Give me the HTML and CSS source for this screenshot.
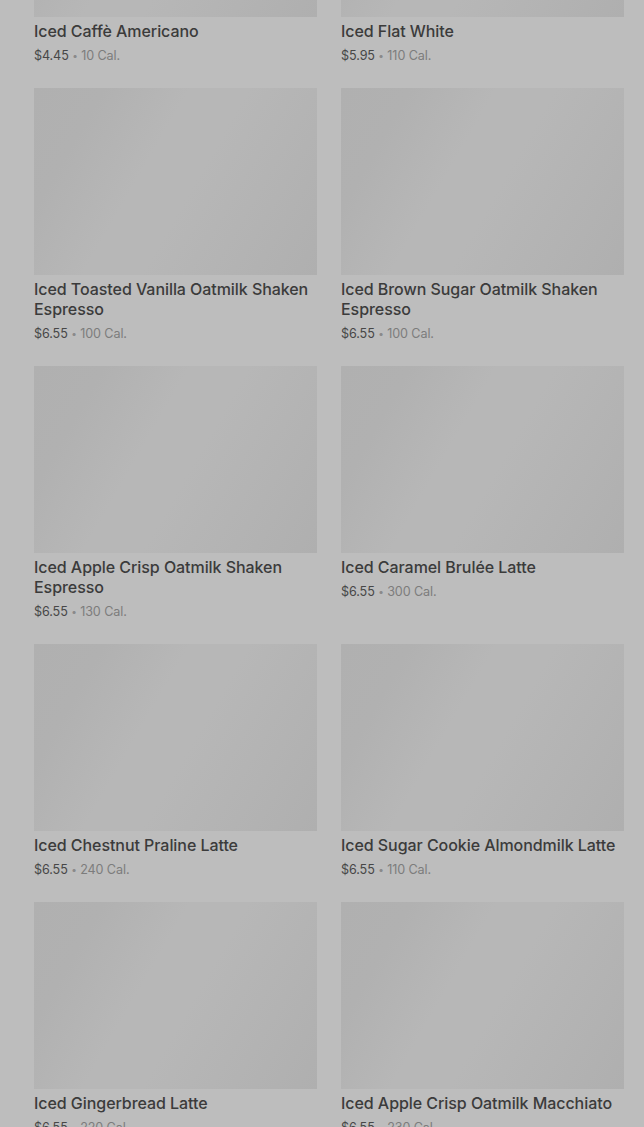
FILE: index.html
```html
<!DOCTYPE html>
<html>
<head>
<meta charset="utf-8">
<link rel="stylesheet" href="styles.css">
</head>
<body>
<div class="page">
  <div class="grid">
    <div class="card"><div class="thumb"></div><div class="name">Iced Caffè Americano</div><div class="meta"><span class="price">$4.45</span> <span class="dot">•</span> 10 Cal.</div></div>
    <div class="card"><div class="thumb"></div><div class="name">Iced Flat White</div><div class="meta"><span class="price">$5.95</span> <span class="dot">•</span> 110 Cal.</div></div>
    <div class="card"><div class="thumb"></div><div class="name">Iced Toasted Vanilla Oatmilk Shaken Espresso</div><div class="meta"><span class="price">$6.55</span> <span class="dot">•</span> 100 Cal.</div></div>
    <div class="card"><div class="thumb"></div><div class="name">Iced Brown Sugar Oatmilk Shaken Espresso</div><div class="meta"><span class="price">$6.55</span> <span class="dot">•</span> 100 Cal.</div></div>
    <div class="card"><div class="thumb"></div><div class="name">Iced Apple Crisp Oatmilk Shaken Espresso</div><div class="meta"><span class="price">$6.55</span> <span class="dot">•</span> 130 Cal.</div></div>
    <div class="card"><div class="thumb"></div><div class="name">Iced Caramel Brulée Latte</div><div class="meta"><span class="price">$6.55</span> <span class="dot">•</span> 300 Cal.</div></div>
    <div class="card"><div class="thumb"></div><div class="name">Iced Chestnut Praline Latte</div><div class="meta"><span class="price">$6.55</span> <span class="dot">•</span> 240 Cal.</div></div>
    <div class="card"><div class="thumb"></div><div class="name">Iced Sugar Cookie Almondmilk Latte</div><div class="meta"><span class="price">$6.55</span> <span class="dot">•</span> 110 Cal.</div></div>
    <div class="card"><div class="thumb"></div><div class="name">Iced Gingerbread Latte</div><div class="meta"><span class="price">$6.55</span> <span class="dot">•</span> 220 Cal.</div></div>
    <div class="card"><div class="thumb"></div><div class="name">Iced Apple Crisp Oatmilk Macchiato</div><div class="meta"><span class="price">$6.55</span> <span class="dot">•</span> 230 Cal.</div></div>
  </div>
</div>
</body>
</html>
```
FILE: styles.css
```css
html, body {
  margin: 0;
  padding: 0;
  background: #bdbdbd;
  overflow: hidden;
}
body {
  font-family: Inter, "Noto Sans", sans-serif;
  -webkit-font-smoothing: antialiased;
}
.page {
  height: 1127px;
  overflow: hidden;
  padding: 0 20px 0 34px;
}
.grid {
  display: grid;
  grid-template-columns: 283px 283px;
  column-gap: 24px;
  row-gap: 24px;
  margin-top: -170px;
}
.card {
  display: flex;
  flex-direction: column;
}
.thumb {
  height: 187px;
  background: linear-gradient(120deg, #b0b0b0 0%, #b1b1b1 18%, #b7b7b7 40%, #b7b7b7 55%, #b3b3b3 78%, #afafaf 100%);
  margin-bottom: 4px;
}
.name {
  font-size: 16px;
  line-height: 20px;
  font-weight: 500;
  color: #3b3b3b;
  letter-spacing: -0.06px;
}
.meta {
  margin-top: 3px;
  padding-top: 1px;
  height: 19px;
  font-size: 12.6px;
  line-height: 20px;
  color: #7c7c7c;
  letter-spacing: -0.1px;
}
.price {
  color: #474747;
}
.dot {
  font-size: 10px;
  color: #8a8a8a;
  vertical-align: 1px;
}
```
